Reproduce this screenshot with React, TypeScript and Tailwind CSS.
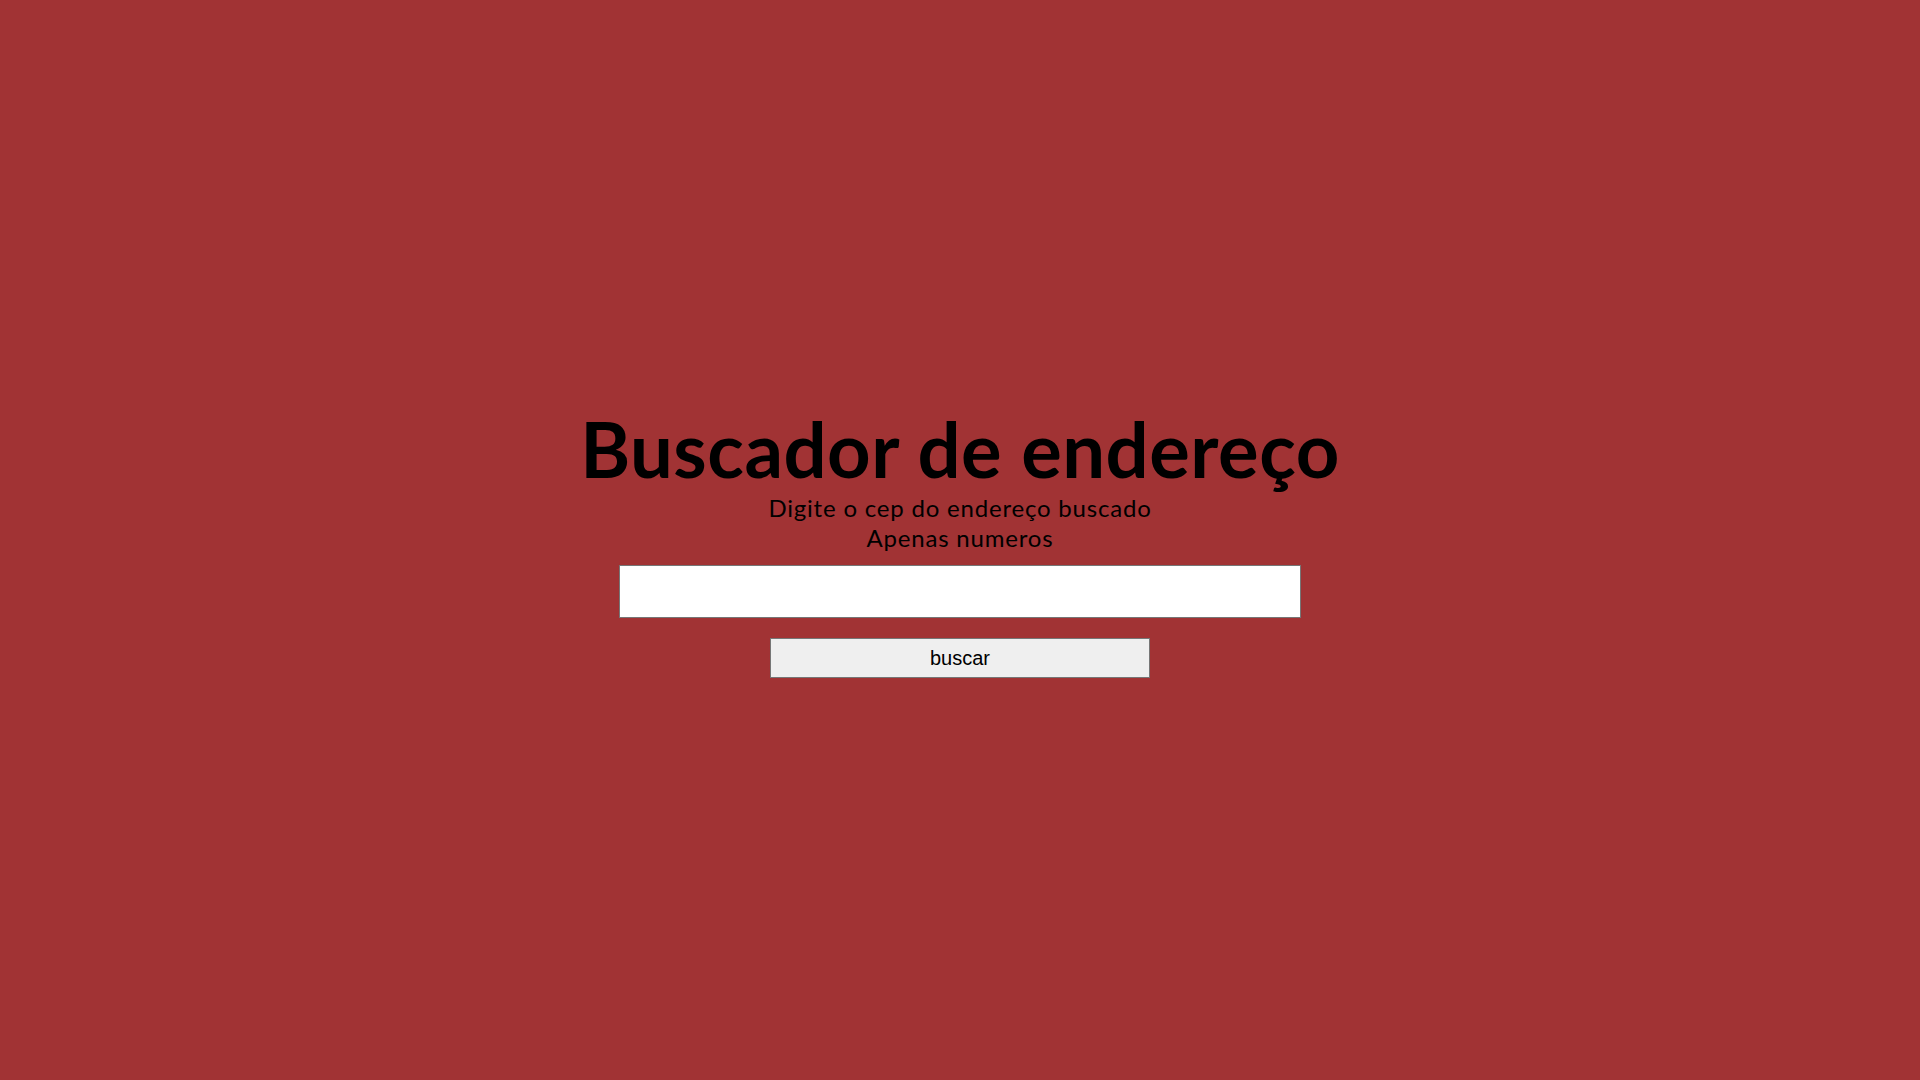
export default function App() {
  return (
    <div className="min-h-screen w-full bg-[#a13334] flex flex-col items-center justify-center pt-[6px]" style={{ fontFamily: "Lato, 'Noto Sans', sans-serif" }}>
      <h1 className="text-[76px] font-bold leading-[80px] text-black tracking-[0.5px]">Buscador de endereço</h1>
      <p className="text-[24px] leading-[30px] text-black mt-[4px] tracking-[0.8px]">Digite o cep do endereço buscado</p>
      <p className="text-[24px] leading-[30px] text-black tracking-[0.8px]">Apenas numeros</p>
      <input type="text" className="mt-[12px] w-[682px] h-[53px] bg-white border border-[#767676] outline-none" />
      <button className="mt-[20px] w-[380px] h-[40px] bg-[#efefef] border border-[#767676] text-black text-[20px]" style={{ fontFamily: "'Liberation Sans', Arial, sans-serif" }}>buscar</button>
    </div>
  );
}
